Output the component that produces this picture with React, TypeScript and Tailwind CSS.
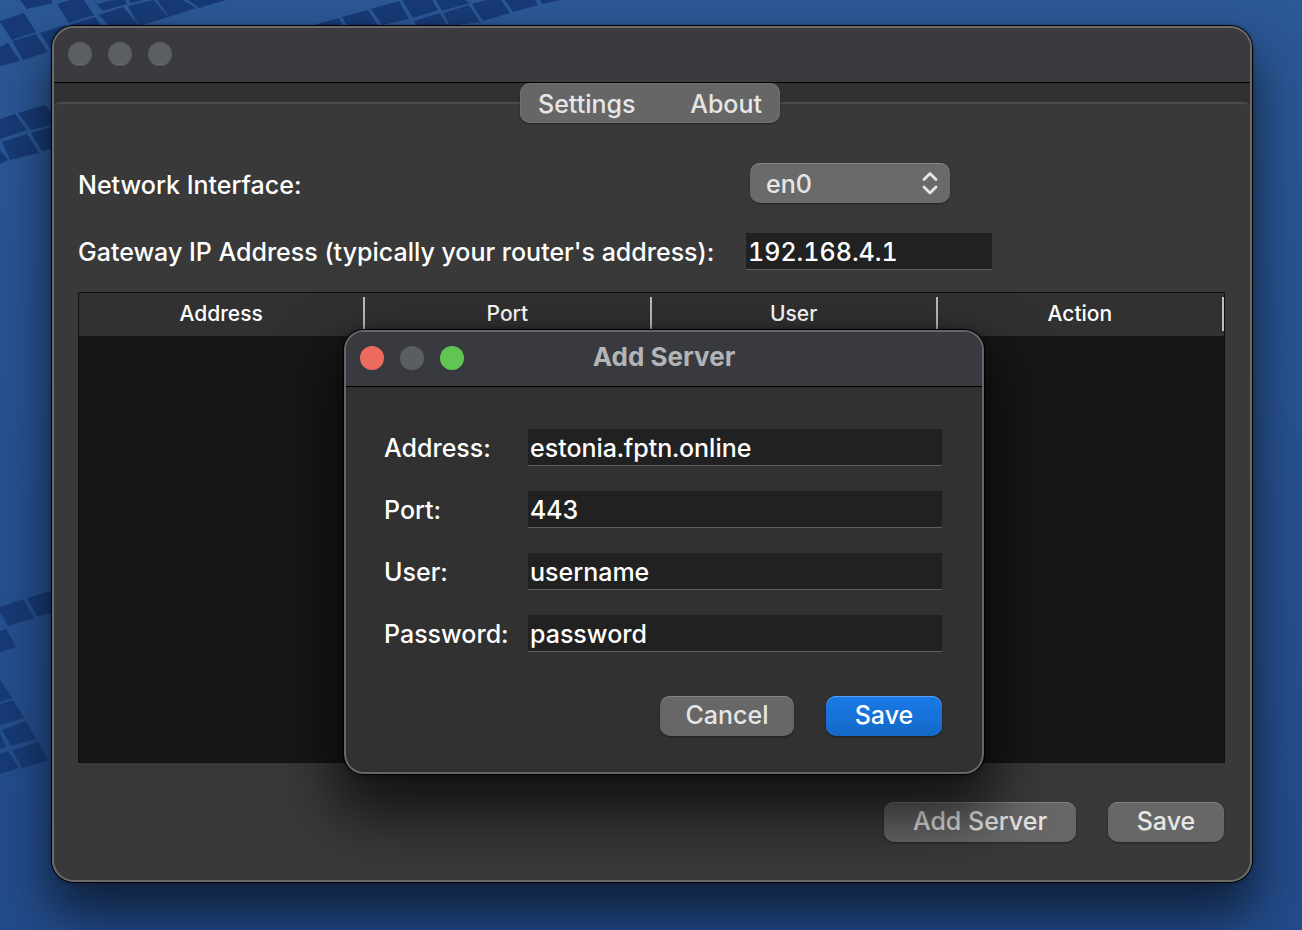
import type { ReactNode } from "react";

const tiles = [
  "20,0 51,0 53,3 27,9",
  "0,21 24,13 36,32 12,40 0,22",
  "57,4 70,0 84,0 94,15 69,23",
  "0,47 8,43 20,61 0,66",
  "12,41 36,34 48,52 23,60",
  "40,33 65,25 80,44 52,51",
  "69,25 95,17 108,34 75,34",
  "99,15 123,7 140,27 110,27",
  "113,0 125,0 127,4 103,11 97,4",
  "128,6 154,0 168,17 139,26",
  "129,0 145,0 131,3",
  "157,0 183,0 196,8 169,17",
  "188,0 226,0 199,8",
  "0,119 15,114 27,130 0,139",
  "18,113 45,105 60,123 31,130",
  "2,142 27,134 39,153 10,160",
  "0,150 8,160 0,164",
  "31,133 60,124 70,144 42,151",
  "0,607 23,599 34,618 8,626 0,612",
  "27,598 60,588 60,612 37,616",
  "0,631 6,629 16,647 0,652",
  "0,679 12,698 0,702",
  "0,704 13,700 24,718 0,725",
  "2,730 26,721 36,739 11,746",
  "0,734 6,747 0,749",
  "12,750 38,742 48,760 22,768",
  "0,754 8,751 19,768 0,774",
  "315,25 339,18 343,27 310,27",
  "342,17 368,10 379,27 348,27",
  "371,9 399,1 409,19 382,25",
  "402,0 432,0 438,10 413,18",
  "414,21 440,13 448,26 418,27",
  "436,0 465,0 470,3 442,11",
  "443,13 469,5 480,22 450,26",
  "472,4 486,0 501,0 510,13 483,21",
  "505,0 535,0 538,5 513,12",
  "540,0 560,0 542,4",
];

function Lights({ colors }: { colors: string[] }) {
  return (
    <div className="flex gap-4">
      {colors.map((color, i) => (
        <button
          key={i}
          type="button"
          aria-label={["Close", "Minimize", "Zoom"][i]}
          className={`size-6 rounded-full ${color}`}
        />
      ))}
    </div>
  );
}

function PushButton({
  children,
  width,
  primary = false,
}: {
  children: ReactNode;
  width: string;
  primary?: boolean;
}) {
  const look = primary
    ? "bg-linear-to-b from-[#1a7ae8] to-[#1469c8] text-white shadow-[inset_0_1px_0_#5b9fee,0_1px_2px_#0006]"
    : "bg-[#676767] text-[#e6e6e6] shadow-[inset_0_1px_0_#858585,0_1px_2px_#0006]";
  return (
    <button type="button" className={`h-10 rounded-[10px] pb-0.5 ${width} ${look}`}>
      {children}
    </button>
  );
}

const inputLook =
  "h-[37px] min-w-0 border-b border-[#606060] bg-[#212121] px-0.5 pt-0.5 text-white tabular-nums outline-none";

function Field({ id, label, value }: { id: string; label: string; value: string }) {
  return (
    <>
      <label htmlFor={id}>{label}</label>
      <input id={id} defaultValue={value} className={inputLook} />
    </>
  );
}

function AddServerDialog() {
  return (
    <section
      role="dialog"
      aria-label="Add Server"
      className="absolute top-[304px] left-[292px] w-[640px] overflow-hidden rounded-[20px] border-2 border-[#646667] bg-[#313131] shadow-[0_0_0_1px_#000,0_30px_60px_10px_#000000b0,0_0_6px_#00000080]"
    >
      <header className="grid h-[55px] grid-cols-[1fr_auto_1fr] items-center border-b border-black bg-[#383a3f] px-3.5 pb-0.5">
        <Lights colors={["bg-[#ed6a5e]", "bg-[#5b5e61]", "bg-[#61c554]"]} />
        <h2 className="pb-0.5 text-[26px] font-bold text-[#b3b4b6]">Add Server</h2>
      </header>
      <form className="pt-[42px] pr-10 pb-9 pl-[38px]">
        <div className="grid grid-cols-[126px_1fr] items-center gap-x-[18px] gap-y-[25px]">
          <Field id="address" label="Address:" value="estonia.fptn.online" />
          <Field id="port" label="Port:" value="443" />
          <Field id="user" label="User:" value="username" />
          <Field id="password" label="Password:" value="password" />
        </div>
        <div className="mt-11 flex justify-end gap-8">
          <PushButton width="w-[134px]">Cancel</PushButton>
          <PushButton width="w-[116px]" primary>
            Save
          </PushButton>
        </div>
      </form>
    </section>
  );
}

export default function App() {
  return (
    <div className="relative isolate flex min-h-screen overflow-hidden bg-linear-to-b from-[#2b5896] to-[#234b8a] pt-[26px] pr-[50px] pb-12 pl-[52px] font-['Inter','Liberation_Sans',sans-serif] text-[25px] leading-8 font-medium text-white">
      <svg aria-hidden="true" className="absolute top-0 left-0 -z-10" width="620" height="800" fill="#173a76">
        {tiles.map((points) => (
          <polygon key={points} points={points} />
        ))}
      </svg>

      <main className="relative flex min-w-0 flex-1 rounded-[22px] bg-[#393939] shadow-[0_0_0_1px_#000,0_30px_50px_4px_#00000090,0_0_4px_#00000070]">
        <div className="flex min-w-0 flex-1 flex-col overflow-hidden rounded-[22px] border-2 border-[#6b6b6b]">
          <header className="flex h-[55px] shrink-0 items-center border-b border-black bg-[#3a3a3f] px-3.5 pb-0.5">
            <Lights colors={["bg-[#5d6062]", "bg-[#5d6062]", "bg-[#5d6062]"]} />
          </header>

          <nav className="grid shrink-0 bg-[#313131]">
            <div className="col-start-1 row-start-1 mt-[19px] rounded-t-md border-t-2 border-[#4a4a4a] bg-[#393939]" />
            <div className="col-start-1 row-start-1 mr-1 flex h-10 w-[260px] items-center justify-between justify-self-center rounded-[10px] bg-[#666666] px-[18px] pt-0.5 text-[#e6e6e6] shadow-[inset_0_0_0_1px_#707070,0_1px_2px_#0006]">
              <button type="button">Settings</button>
              <button type="button">About</button>
            </div>
          </nav>

          <div className="flex flex-1 flex-col pt-10 pr-[25px] pb-[38px] pl-6">
            <div className="grid grid-cols-[644px_1fr] items-center gap-x-6 gap-y-[30px]">
              <label htmlFor="interface" className="pt-1">
                Network Interface:
              </label>
              <div className="ml-1 grid w-[200px] items-center">
                <select
                  id="interface"
                  className="col-start-1 row-start-1 h-10 appearance-none rounded-[10px] bg-[#6a6a6a] px-4 pt-0.5 text-[#e6e6e6] shadow-[inset_0_1px_0_#858585,0_1px_2px_#0006]"
                >
                  <option>en0</option>
                </select>
                <svg
                  aria-hidden="true"
                  className="pointer-events-none col-start-1 row-start-1 mr-3 justify-self-end"
                  width="16"
                  height="24"
                  viewBox="0 0 16 24"
                  fill="none"
                  stroke="#e6e6e6"
                  strokeWidth="2.8"
                  strokeLinecap="round"
                  strokeLinejoin="round"
                >
                  <path d="M2 8.500 8 2.500l6 6M2 16l6 6 6-6" />
                </svg>
              </div>
              <label htmlFor="gateway" className="whitespace-nowrap">
                Gateway IP Address (typically your router's address):
              </label>
              <input id="gateway" defaultValue="192.168.4.1" className={`${inputLook} w-[246px]`} />
            </div>

            <div className="mt-[22px] flex-1 border border-[#111111] bg-[#171717]">
              <table className="w-full table-fixed text-[21px] leading-6">
                <thead className="bg-[#313131]">
                  <tr>
                    {["Address", "Port", "User", "Action"].map((name) => (
                      <th key={name} scope="col" className="h-[43px] px-0 pt-1 pb-0 align-top font-medium">
                        <div className="flex h-[34px] items-center justify-center border-r-2 border-[#bdbdbd]">
                          {name}
                        </div>
                      </th>
                    ))}
                  </tr>
                </thead>
                <tbody />
              </table>
            </div>

            <div className="mt-[39px] mr-px flex justify-end gap-8">
              <PushButton width="w-[192px]">Add Server</PushButton>
              <PushButton width="w-[116px]">Save</PushButton>
            </div>
          </div>
        </div>
        <AddServerDialog />
      </main>
    </div>
  );
}
